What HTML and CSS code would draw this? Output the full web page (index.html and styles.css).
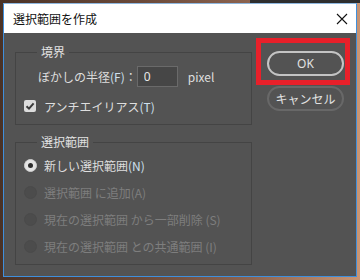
FILE: index.html
```html
<!DOCTYPE html>
<html lang="ja">
<head>
  <meta charset="UTF-8" />
  <title>選択範囲を作成</title>
  <link rel="stylesheet" href="styles.css">
</head>
<body>
  <div class="dialog">
    <div class="titlebar">
      <span class="title">選択範囲を作成</span>
      <svg class="close" width="12" height="12" viewBox="0 0 12 12">
        <path d="M1 1 L11 11 M11 1 L1 11" stroke="#111" stroke-width="1.1" fill="none"/>
      </svg>
    </div>

    <div class="content">
      <div class="left">
        <fieldset class="group group-edge">
          <legend>境界</legend>
          <div class="row feather">
            <label for="radius">ぼかしの半径<span class="key">(F)</span>：</label>
            <input type="text" id="radius" class="num" value="0" />
            <span class="unit">pixel</span>
          </div>
          <div class="row check-row">
            <span class="checkbox">
              <svg width="12" height="12" viewBox="0 0 12 12">
                <path d="M2.5 6.2 L5 8.6 L9.6 3.4" stroke="#3a3a3a" stroke-width="2" fill="none"/>
              </svg>
            </span>
            <span>アンチエイリアス<span class="key">(T)</span></span>
          </div>
        </fieldset>

        <fieldset class="group group-sel">
          <legend>選択範囲</legend>
          <div class="radio-row">
            <span class="radio on"></span>
            <span>新しい選択範囲<span class="key">(N)</span></span>
          </div>
          <div class="radio-row disabled">
            <span class="radio"></span>
            <span>選択範囲 に追加(A)</span>
          </div>
          <div class="radio-row disabled">
            <span class="radio"></span>
            <span>現在の選択範囲 から一部削除 (S)</span>
          </div>
          <div class="radio-row disabled">
            <span class="radio"></span>
            <span>現在の選択範囲 との共通範囲 (I)</span>
          </div>
        </fieldset>
      </div>

      <div class="right">
        <button class="btn btn-ok">OK</button>
        <button class="btn btn-cancel">キャンセル</button>
        <div class="highlight"></div>
      </div>
    </div>
  </div>
</body>
</html>
```

FILE: styles.css
```css
* {
  margin: 0;
  padding: 0;
  box-sizing: border-box;
}

body {
  width: 360px;
  height: 280px;
  overflow: hidden;
  font-family: "Noto Sans CJK JP", "Noto Sans", sans-serif;
  font-size: 12px;
  background:
    linear-gradient(90deg, transparent 0, transparent 250px, #2e2e2e 250px) top / 100% 3px no-repeat,
    linear-gradient(90deg, #4a3226 0%, #6b4a3a 40%, #8d6450 70%, #c99472 100%);
}

.dialog {
  margin: 3px 0 0 3px;
  width: 354px;
  height: 274px;
  border: 1px solid #3f8fdc;
  border-top-color: #8fb8e0;
  background: #535353;
  display: flex;
  flex-direction: column;
}

.titlebar {
  height: 29px;
  background: #fff;
  display: flex;
  align-items: center;
  justify-content: space-between;
  padding: 0 8px 0 9px;
}

.title {
  color: #111;
  font-size: 12px;
}

.content {
  flex: 1;
  display: flex;
  padding: 11px 0 0 11px;
  color: #dedede;
}

.left {
  width: 237px;
}

.group {
  border: 1px solid #444;
  padding: 0 8px;
}

.group legend {
  margin-left: 13px;
  padding: 0 4px;
  line-height: 16px;
  font-size: 12px;
  color: #e2e2e2;
}

.group-edge {
  padding-top: 6px;
  padding-bottom: 8px;
}

.group-sel {
  margin-top: 9px;
  padding-top: 2px;
  padding-bottom: 4px;
}

.row {
  display: flex;
  align-items: center;
}

.feather {
  height: 21px;
  padding-left: 14px;
}

.key {
  color: #cfe0ee;
}

.num {
  width: 41px;
  height: 21px;
  margin-left: 0;
  padding: 0 6px;
  background: #464646;
  border: 1px solid #6a6a6a;
  color: #e8e8e8;
  font-family: "Noto Sans", sans-serif;
  font-size: 12px;
}

.unit {
  margin-left: 10px;
}

.check-row {
  height: 20px;
  margin-top: 9px;
  gap: 8px;
}

.checkbox {
  width: 12px;
  height: 12px;
  background: #dcdcdc;
  border-radius: 2px;
  display: flex;
}

.radio-row {
  height: 27px;
  display: flex;
  align-items: center;
  gap: 7px;
}

.radio {
  width: 13px;
  height: 13px;
  border-radius: 50%;
  background: #4c4c4c;
  border: 1px solid #4a4a4a;
  display: flex;
  align-items: center;
  justify-content: center;
}

.radio.on {
  background: #e4e4e4;
  border-color: #cfcfcf;
}

.radio.on::after {
  content: "";
  width: 5px;
  height: 5px;
  border-radius: 50%;
  background: #2c2c2c;
}

.disabled {
  color: #7e7e7e;
}

.right {
  position: relative;
  margin-left: 15px;
  padding-top: 7px;
  display: flex;
  flex-direction: column;
  gap: 10px;
}

.btn {
  width: 77px;
  height: 25px;
  border-radius: 13px;
  background: transparent;
  color: #e2e2e2;
  font-family: "Noto Sans CJK JP", "Noto Sans", sans-serif;
  font-size: 12px;
}

.btn-ok {
  border: 2px solid #c4c4c4;
  font-family: "Noto Sans", sans-serif;
}

.btn-cancel {
  border: 2px solid #686868;
}

.highlight {
  position: absolute;
  left: -11px;
  top: -6px;
  width: 94px;
  height: 47px;
  border: 5px solid #e8202a;
}
```
